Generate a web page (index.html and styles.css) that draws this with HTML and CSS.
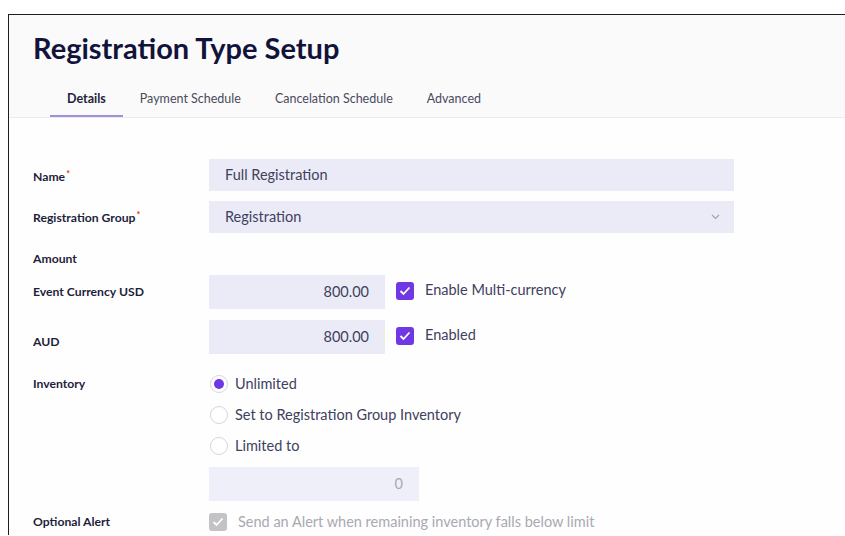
FILE: index.html
```html
<!DOCTYPE html>
<html lang="en">
<head>
<meta charset="utf-8">
<title>Registration Type Setup</title>
<link rel="stylesheet" href="styles.css">
</head>
<body>
<div class="frame">
  <header class="page-head">
    <h1 class="title">Registration Type Setup</h1>
    <nav class="tabs">
      <a class="tab active">Details</a>
      <a class="tab">Payment Schedule</a>
      <a class="tab">Cancelation Schedule</a>
      <a class="tab">Advanced</a>
    </nav>
  </header>

  <form class="form">
    <div class="row row-name">
      <label class="label">Name<span class="req">*</span></label>
      <div class="field wide">Full Registration</div>
    </div>

    <div class="row row-group">
      <label class="label">Registration Group<span class="req">*</span></label>
      <div class="field wide select">
        <span>Registration</span>
        <svg class="chevron" width="9" height="6" viewBox="0 0 9 6"><path d="M1 1l3.5 3.5L8 1" fill="none" stroke="#a0a0b0" stroke-width="1.2"/></svg>
      </div>
    </div>

    <div class="row row-amount">
      <label class="label">Amount</label>
    </div>

    <div class="row row-usd">
      <label class="label">Event Currency USD</label>
      <div class="field amount">800.00</div>
      <span class="check on"><svg width="12" height="10" viewBox="0 0 12 10"><path d="M1.5 5l3 3 6-6.5" fill="none" stroke="#fff" stroke-width="1.8"/></svg></span>
      <span class="check-text">Enable Multi-currency</span>
    </div>

    <div class="row row-aud">
      <label class="label">AUD</label>
      <div class="field amount">800.00</div>
      <span class="check on"><svg width="12" height="10" viewBox="0 0 12 10"><path d="M1.5 5l3 3 6-6.5" fill="none" stroke="#fff" stroke-width="1.8"/></svg></span>
      <span class="check-text">Enabled</span>
    </div>

    <div class="row row-inventory">
      <label class="label">Inventory</label>
      <div class="options">
        <div class="option"><span class="radio on"></span><span>Unlimited</span></div>
        <div class="option"><span class="radio"></span><span>Set to Registration Group Inventory</span></div>
        <div class="option"><span class="radio"></span><span>Limited to</span></div>
        <div class="field limit">0</div>
      </div>
    </div>

    <div class="row row-alert">
      <label class="label">Optional Alert</label>
      <span class="check off"><svg width="12" height="10" viewBox="0 0 12 10"><path d="M1.5 5l3 3 6-6.5" fill="none" stroke="#fff" stroke-width="1.8"/></svg></span>
      <span class="check-text muted">Send an Alert when remaining inventory falls below limit</span>
    </div>
  </form>
</div>
</body>
</html>
```

FILE: styles.css
```css
html, body {
  margin: 0;
  padding: 0;
  background: #fff;
  overflow: hidden;
}

body {
  font-family: Lato, "Open Sans", sans-serif;
  color: #1c1c3a;
}

.frame {
  margin: 14px 0 0 8px;
  border-top: 1px solid #1e1e1e;
  border-left: 1px solid #1e1e1e;
  height: calc(100vh - 15px);
  box-sizing: border-box;
  background: #fefefe;
}

/* page heading + tabs */
.page-head {
  background: #fafafa;
  border-bottom: 1px solid #ececec;
  padding: 16px 0 0 24px;
}

.title {
  margin: 0;
  font-size: 29px;
  line-height: 34px;
  font-weight: 700;
  color: #11133a;
}

.tabs {
  display: flex;
  margin: 26px 0 0 17px;
}

.tab {
  padding: 0 17px 8px;
  font-size: 12.5px;
  line-height: 16px;
  color: #4a4b5e;
  border-bottom: 2px solid transparent;
}

.tab.active {
  color: #23243a;
  font-weight: 700;
  border-bottom-color: #a48fd9;
}

/* form */
.form {
  padding: 41px 0 0 24px;
}

.row {
  display: flex;
  align-items: flex-start;
}

.label {
  width: 176px;
  flex: none;
  font-size: 12.2px;
  font-weight: 700;
  color: #1e1f3c;
  line-height: 16px;
}

.req {
  color: #e0302c;
  font-size: 9px;
  position: relative;
  top: -4px;
  margin-left: 1px;
}

.field {
  background: #ebebf8;
  font-size: 14.5px;
  color: #40415c;
  box-sizing: border-box;
}

.wide {
  width: 525px;
  height: 32px;
  line-height: 32px;
  padding: 0 16px;
}

.select {
  display: flex;
  justify-content: space-between;
  align-items: center;
  padding-right: 14px;
}

.row-name .label,
.row-group .label {
  padding-top: 9px;
}

.row-name .label {
  padding-top: 10px;
}

.row-group {
  margin-top: 10px;
}

.row-amount {
  margin-top: 18px;
}

.row-usd {
  margin-top: 8px;
}

.amount {
  width: 176px;
  height: 34px;
  line-height: 34px;
  text-align: right;
  padding-right: 16px;
}

.row-usd .label {
  padding-top: 9px;
}

.row-aud {
  margin-top: 11px;
}

.row-aud .label {
  padding-top: 14px;
}

.check {
  width: 18px;
  height: 18px;
  border-radius: 3px;
  flex: none;
  display: flex;
  align-items: center;
  justify-content: center;
  box-sizing: border-box;
}

.row-usd .check,
.row-aud .check {
  margin: 7px 0 0 11px;
}

.check.on {
  background: #7037e4;
}

.check.off {
  background: #c3c3c6;
}

.check-text {
  margin-left: 11px;
  font-size: 14.5px;
  line-height: 18px;
  color: #40415c;
}

.row-usd .check-text,
.row-aud .check-text {
  margin-top: 6px;
}

.check-text.muted {
  color: #a9a9b2;
}

/* inventory radios */
.row-inventory {
  margin-top: 21px;
}

.row-inventory .label {
  line-height: 18px;
}

.options {
  display: flex;
  flex-direction: column;
  gap: 13px;
}

.option {
  display: flex;
  align-items: center;
  gap: 7px;
  font-size: 14.5px;
  line-height: 18px;
  color: #40415c;
}

.radio {
  width: 18px;
  height: 18px;
  border-radius: 50%;
  border: 1px solid #d6d6dc;
  background: #fff;
  box-sizing: border-box;
  display: flex;
  align-items: center;
  justify-content: center;
  margin-left: 1px;
}

.radio.on::after {
  content: "";
  width: 10px;
  height: 10px;
  border-radius: 50%;
  background: #6f36e3;
}

.limit {
  width: 210px;
  height: 34px;
  line-height: 34px;
  text-align: right;
  padding-right: 16px;
  color: #a8a8b8;
  margin-top: -1px;
  background: #efeffa;
}

.row-alert {
  margin-top: 12px;
  align-items: center;
}

.row-alert .label {
  line-height: 18px;
}
```
